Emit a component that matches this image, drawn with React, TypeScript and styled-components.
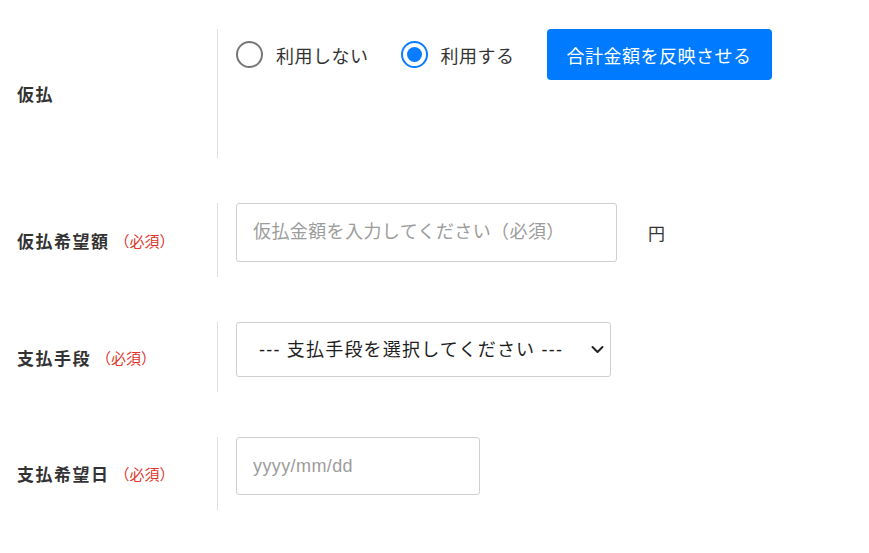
import React from "react";
import styled, { createGlobalStyle } from "styled-components";

const Global = createGlobalStyle`
  html, body { margin: 0; padding: 0; background: #fff; }
  body { font-family: "Noto Sans CJK JP", "Noto Sans", sans-serif; color: #333; }
  * { box-sizing: border-box; }
`;

const Form = styled.div`
  display: flex;
  flex-direction: column;
  gap: 45px;
  padding-top: 29px;
`;

const Row = styled.div`
  display: flex;
  align-items: stretch;
`;

const Label = styled.div`
  width: 217px;
  padding-left: 17px;
  display: flex;
  align-items: center;
  font-size: 17px;
  font-weight: 700;
  letter-spacing: 1.5px;
  color: #333;
`;

const Required = styled.span`
  font-size: 15px;
  font-weight: 400;
  letter-spacing: 0;
  color: #e0362c;
  margin-left: 5px;
`;

const Field = styled.div<{ $minHeight?: number }>`
  border-left: 1px solid #dedede;
  padding: 0 0 15px 18px;
  min-height: ${(p) => (p.$minHeight ? `${p.$minHeight}px` : "auto")};
  display: flex;
  align-items: flex-start;
  gap: 31px;
`;

const RadioGroup = styled.div`
  display: flex;
  align-items: center;
  height: 51px;
  gap: 32px;
`;

const RadioLabel = styled.label`
  display: flex;
  align-items: center;
  gap: 13px;
  font-size: 18px;
  letter-spacing: 0.5px;
  color: #333;
  cursor: pointer;
`;

const Radio = styled.input.attrs({ type: "radio" })`
  appearance: none;
  margin: 0;
  width: 27px;
  height: 27px;
  border-radius: 50%;
  border: 2px solid #767676;
  background: #fff;
  position: relative;
  &:checked {
    border-color: #0a7cff;
  }
  &:checked::after {
    content: "";
    position: absolute;
    left: 4px;
    top: 4px;
    width: 15px;
    height: 15px;
    border-radius: 50%;
    background: #0a7cff;
  }
`;

const PrimaryButton = styled.button`
  height: 51px;
  padding: 0 20px;
  border: none;
  border-radius: 4px;
  background: #007bff;
  color: #fff;
  font-family: "Noto Sans CJK JP", sans-serif;
  font-size: 18px;
  letter-spacing: 0.5px;
  cursor: pointer;
`;

const TextInput = styled.input<{ $width: number; $height: number }>`
  width: ${(p) => p.$width}px;
  height: ${(p) => p.$height}px;
  border: 1px solid #cfcfcf;
  border-radius: 3px;
  padding: 0 16px;
  font-family: "Liberation Sans", "Noto Sans CJK JP", sans-serif;
  font-size: 18px;
  letter-spacing: 0.4px;
  color: #333;
  &::placeholder {
    color: #9c9c9c;
  }
`;

const Unit = styled.span`
  font-size: 17px;
  color: #333;
  line-height: 59px;
`;

const SelectWrap = styled.div`
  position: relative;
  width: 375px;
  height: 55px;
`;

const Select = styled.select`
  appearance: none;
  width: 100%;
  height: 100%;
  border: 1px solid #cfcfcf;
  border-radius: 3px;
  background: #fff;
  padding: 0 40px 0 22px;
  font-family: "Liberation Sans", "Noto Sans CJK JP", sans-serif;
  font-size: 18px;
  letter-spacing: 1.2px;
  color: #1e1e1e;
`;

const Chevron = styled.svg`
  position: absolute;
  right: 7px;
  top: 21px;
  width: 13px;
  height: 13px;
  pointer-events: none;
`;

export default function App() {
  return (
    <>
      <Global />
      <Form>
        <Row>
          <Label>仮払</Label>
          <Field $minHeight={129}>
            <RadioGroup>
              <RadioLabel>
                <Radio name="kari" />
                利用しない
              </RadioLabel>
              <RadioLabel>
                <Radio name="kari" defaultChecked />
                利用する
              </RadioLabel>
              <PrimaryButton>合計金額を反映させる</PrimaryButton>
            </RadioGroup>
          </Field>
        </Row>
        <Row>
          <Label>
            仮払希望額<Required>（必須）</Required>
          </Label>
          <Field>
            <TextInput $width={381} $height={59} placeholder="仮払金額を入力してください（必須）" />
            <Unit>円</Unit>
          </Field>
        </Row>
        <Row>
          <Label>
            支払手段<Required>（必須）</Required>
          </Label>
          <Field>
            <SelectWrap>
              <Select defaultValue="">
                <option value="">--- 支払手段を選択してください ---</option>
              </Select>
              <Chevron viewBox="0 0 13 13">
                <path d="M1.5 4 L6.5 9 L11.5 4" fill="none" stroke="#222" strokeWidth="2" strokeLinecap="round" strokeLinejoin="round" />
              </Chevron>
            </SelectWrap>
          </Field>
        </Row>
        <Row>
          <Label>
            支払希望日<Required>（必須）</Required>
          </Label>
          <Field>
            <TextInput $width={244} $height={58} placeholder="yyyy/mm/dd" />
          </Field>
        </Row>
      </Form>
    </>
  );
}
